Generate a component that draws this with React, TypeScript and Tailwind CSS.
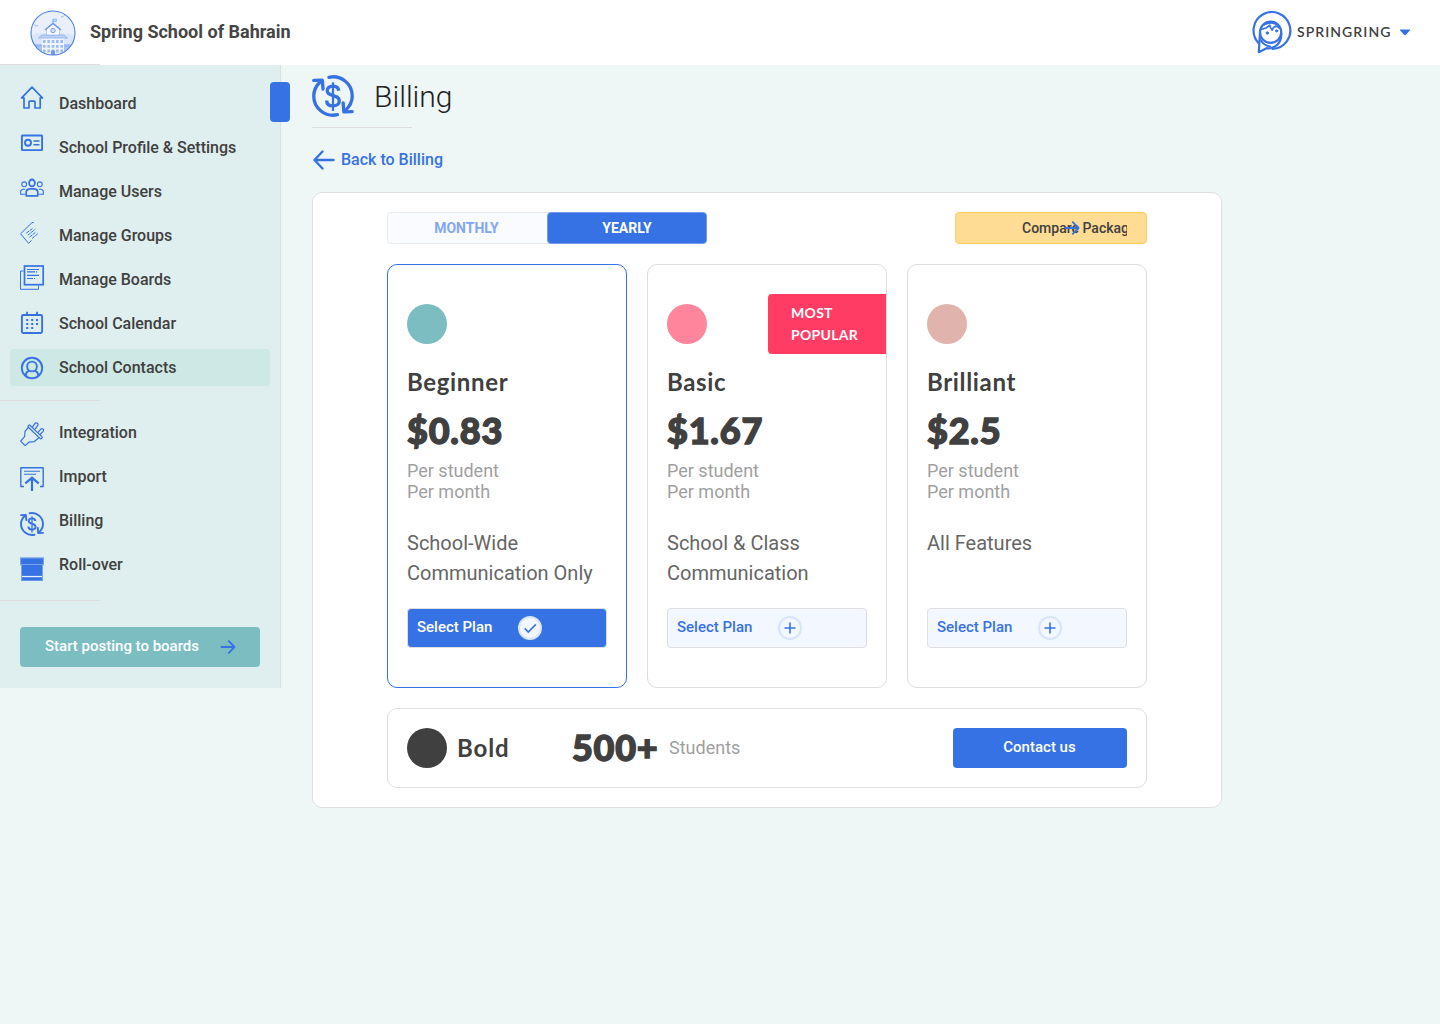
import type { ReactNode } from "react";

const BLUE = "#3772e4";

function Svg({ className = "", children, size = 24 }: { className?: string; children: ReactNode; size?: number }) {
  return (
    <svg
      width={size}
      height={size}
      viewBox="0 0 24 24"
      fill="none"
      stroke={BLUE}
      strokeWidth="1.6"
      className={`shrink-0 ${className}`}
    >
      {children}
    </svg>
  );
}

function HomeIcon({ className }: { className?: string }) {
  return (
    <Svg className={className}>
      <path d="M1.600 11.800 12 1.200l10.400 10.600h-2.200V22h-5.200v-6q0-.9-.9-.9H9.900q-.9 0-.9.900v6H4V11.800z" strokeLinejoin="round" strokeWidth="1.700" />
    </Svg>
  );
}

function ProfileIcon({ className }: { className?: string }) {
  return (
    <Svg className={className}>
      <rect x="1.9" y="4.500" width="20.200" height="14.600" rx=".6" strokeWidth="1.900" />
      <circle cx="8" cy="11.800" r="3" strokeWidth="1.900" />
      <path d="M13.500 10h6M13.500 13.800h6" strokeWidth="1.500" />
    </Svg>
  );
}

function UsersIcon({ className }: { className?: string }) {
  return (
    <Svg className={className}>
      <ellipse cx="12" cy="6.900" rx="2.900" ry="3.400" strokeWidth="1.800" />
      <path d="M6.200 19.800v-3.300c0-2.600 2-3.600 4.200-3.600h3.200c2.200 0 4.200 1 4.200 3.600v3.300z" strokeLinejoin="round" strokeWidth="1.700" />
      <g strokeWidth="1.100">
        <circle cx="4.200" cy="8.300" r="2.400" />
        <circle cx="19.800" cy="8.300" r="2.400" />
        <path d="M5.200 18.300H.6v-2.200c0-1.800 1.200-2.800 3-2.800h1.600M18.800 18.300h4.600v-2.200c0-1.800-1.200-2.800-3-2.800h-1.600" />
      </g>
    </Svg>
  );
}

function GroupsIcon({ className }: { className?: string }) {
  return (
    <Svg className={className}>
      <g strokeWidth="1" strokeLinejoin="round">
        <path d="M13.800 1.600h-1.800L.6 12.800l8 9.600 3-3" />
        <path d="m6.200 12.200 6.600-4.800M7.800 14.200l7.500-6M9.500 16.200l6-5M12 17.500l5.800-4.800" strokeDasharray="3.500 .7" />
      </g>
    </Svg>
  );
}

function BoardsIcon({ className }: { className?: string }) {
  return (
    <Svg className={className}>
      <rect x="4.500" y="1" width="18.700" height="18.700" strokeWidth="1.700" />
      <path d="M3.700 6H.5v18.300h18v-3.800" strokeWidth="1" />
      <path d="M7 4.500h12M7 6.800h8m1 0h1.200M7 10.300h12M7 13.500h6m1 0h1" strokeWidth="1.200" />
    </Svg>
  );
}

function CalendarIcon({ className }: { className?: string }) {
  return (
    <Svg className={className}>
      <rect x="1.900" y="4" width="20.200" height="18" rx="1.500" strokeWidth="1.900" />
      <path d="M7 .8V4M17 .8V4" strokeWidth="1.800" />
      <path d="M6.200 9h2M11.200 9h2M16 9h2M6.200 13h2M11.200 13h2M16 13h2M6.200 17h2M11.200 17h2" strokeWidth="1.800" />
    </Svg>
  );
}

function ContactsIcon({ className }: { className?: string }) {
  return (
    <Svg className={className}>
      <circle cx="12" cy="12" r="10.200" strokeWidth="1.900" />
      <circle cx="12" cy="10.500" r="4.900" strokeWidth="1.900" />
      <path d="M5.700 19.300c.2-2.500 1.400-3.900 3.400-4.700M18.300 19.300c-.2-2.500-1.400-3.900-3.400-4.700" strokeWidth="1.900" />
    </Svg>
  );
}

function PlugIcon({ className }: { className?: string }) {
  return (
    <Svg className={className}>
      <g strokeWidth="1.200" strokeLinejoin="round" strokeLinecap="round">
        <path d="M8.300 3.600q.8-1.200 1.900-.1L21.800 14.600q1 1-.2 1.900-.9.700-1.700-.1L8.400 5.300q-.8-.9-.1-1.700z" />
        <path d="M8.300 5.500 5 9.300l-.3 5L.7 19.100 5 23.600l3.900-3.400 5.200-.5 4.700-3.900" />
        <path d="m12.700 4.700 2.200-3q1.200-1.500 2.500-.4 1.200 1 .2 2.400l-2.300 3.100M18.100 10.300l2.700-3.100q1.200-1.200 2.200-.2 1.100 1 .1 2.300l-3 3.200" />
      </g>
    </Svg>
  );
}

function ImportIcon({ className }: { className?: string }) {
  return (
    <Svg className={className}>
      <path d="M4 19.500H.8V.7h22.400v18.800H20" strokeWidth="1.400" strokeLinejoin="round" />
      <path d="M4 4.200h16M4 7.300h12" strokeWidth="1.100" />
      <path d="M12 24.400V10.800M5.300 16.400l6.700-5.600 6.700 5.600" strokeWidth="2.200" />
    </Svg>
  );
}

function BillingIcon({ className, size }: { className?: string; size?: number }) {
  return (
    <Svg className={className} size={size}>
      <g strokeWidth="1.900" strokeLinecap="round" strokeLinejoin="round">
        <path d="M9.700 1.300C16.500-.2 23 4.800 23 12c0 3.300-1.600 6.200-4.200 8.500M14.500 22.700C7.500 24.200 1 19 1 12c0-3.300 1.400-6 3.900-8.300" />
        <path d="M1 3.100 5.900 3l.4 5M23 20.900l-4.800.2-.4-5.200" />
      </g>
      <path d="M15.300 9c-.2-1.800-1.500-2.600-3.300-2.600-2 0-3.300 1-3.300 2.600 0 3.800 6.900 1.700 6.900 5.800 0 1.700-1.400 2.800-3.600 2.800S8.400 16.500 8.400 14.500" strokeWidth="1.900" />
      <path d="M12 4.200v16.300" strokeWidth="1.300" />
    </Svg>
  );
}

function RolloverIcon({ className }: { className?: string }) {
  return (
    <svg width="24" height="24" viewBox="0 0 24 24" className={`shrink-0 ${className ?? ""}`}>
      <path d="M0 .3h24v8H0z" fill="#7ba2eb" />
      <path d="M1 1.500h22v5.500H1z" fill={BLUE} />
      <path d="M1 7.300h22V24H1z" fill="#7ba2eb" />
      <path d="M2 8.100h20v10.700H2zM2 20.500h20v2.800H2z" fill={BLUE} />
      <path d="M2 19h20v1H2z" fill="#e6f1fb" />
    </svg>
  );
}

function SchoolLogo() {
  return (
    <svg width="46" height="46" viewBox="0 0 46 46" fill="none" className="shrink-0">
      <defs>
        <clipPath id="logo-disc">
          <circle cx="23" cy="23" r="22" />
        </clipPath>
      </defs>
      <g clipPath="url(#logo-disc)">
        <path d="M0 0h46v46H0z" fill="#e9effb" />
        <path d="M0 28q7-7 12-4l11-3 12 3q5-2 11 4v18H0z" fill="#dae5f9" />
        <path d="M0 34h46v12H0z" fill="#a9c4f4" />
        <path d="M0 36h46" stroke="#8eb0ef" />
        <path d="M12 28h22v18H12z" fill="#eff4fe" />
        <path d="M8.500 28 12 25h22l3.500 3z" fill="#bed2f8" stroke="#8baef0" strokeWidth=".8" />
        <path d="M16.500 25v-7L23 13l6.500 5v7z" fill="#f8faff" stroke="#8baef0" strokeWidth=".6" />
        <path d="m15 20 8-6.500 8 6.500" stroke="#7199e8" strokeWidth="1.600" />
        <circle cx="23" cy="20.500" r="2.200" fill="#d4e2fb" stroke="#6f9af0" />
        <path d="M23 14V9" stroke="#7ca2ef" />
        <path d="M23 9h3.500v2.500H23z" fill="#b7cef8" stroke="#7ca2ef" strokeWidth=".5" />
        <path d="M13 31.500h20M13 36.300h20M13 41h20" stroke="#9dbbf3" strokeWidth="2.800" strokeDasharray="2.600 1.750" />
        <path d="M21 40.500h4V46h-4z" fill="#6f9aec" />
        <path d="M4 14.500 6 16l2-.3M31 7l2-.2 2-2" stroke="#8baef0" strokeWidth=".8" />
      </g>
      <circle cx="23" cy="23" r="22" stroke="#4b80e8" strokeWidth="1.100" />
    </svg>
  );
}

function BirdLogo() {
  return (
    <svg width="40" height="43" viewBox="0 0 40 43" fill="none" stroke={BLUE} strokeWidth="2.200" strokeLinejoin="round" strokeLinecap="round" className="shrink-0">
      <path d="M6.700 32.300A18.400 18.400 0 1 1 20.500 37.900" />
      <path d="M8 21.500 6.800 41.200 14.500 37.200C23 38.300 29.800 32 29.300 22" />
      <circle cx="18.600" cy="21.200" r="10.600" />
      <path d="M9 18.300c3.800-.2 6.600-1.500 8.700-4.200.5 2.100 1.200 3.600 2.500 5 .5-2 1.600-3.400 3.400-4 1.600.2 3.200 1 4.300 2.500" strokeWidth="1.700" />
      <path d="M12.500 13.300c3.500-2.300 9-2.300 12.500 0" strokeWidth="2.400" />
      <path d="M8.200 28.500c2.300 4 5.300 6.300 9.800 7" strokeWidth="2" />
      <circle cx="15.300" cy="22" r="1.200" fill={BLUE} strokeWidth="1" />
      <circle cx="24.700" cy="19.900" r="1.100" fill={BLUE} strokeWidth="1" />
    </svg>
  );
}

function ArrowRight({ className = "" }: { className?: string }) {
  return (
    <svg width="16" height="14" viewBox="0 0 16 14" fill="none" stroke={BLUE} strokeWidth="1.900" strokeLinecap="round" strokeLinejoin="round" className={`shrink-0 ${className}`}>
      <path d="M1.500 7h13M8.800 1.200 14.500 7l-5.700 5.800" />
    </svg>
  );
}

type Item = { label: string; icon: ReactNode; active?: boolean };

const primary: Item[] = [
  { label: "Dashboard", icon: <HomeIcon className="mt-[5px]" /> },
  { label: "School Profile & Settings", icon: <ProfileIcon className="mt-[6px]" /> },
  { label: "Manage Users", icon: <UsersIcon className="mt-[7px]" /> },
  { label: "Manage Groups", icon: <GroupsIcon className="mt-[8px]" /> },
  { label: "Manage Boards", icon: <BoardsIcon className="mt-[8px] overflow-visible" /> },
  { label: "School Calendar", icon: <CalendarIcon className="mt-[10px]" /> },
  { label: "School Contacts", icon: <ContactsIcon className="mt-[7px]" />, active: true },
];

const secondary: Item[] = [
  { label: "Integration", icon: <PlugIcon className="mt-[11px]" /> },
  { label: "Import", icon: <ImportIcon className="mt-[12px]" /> },
  { label: "Billing", icon: <BillingIcon className="mt-[13px]" /> },
  { label: "Roll-over", icon: <RolloverIcon className="mt-[14px]" /> },
];

function NavItem({ item, leading = "leading-[44px]" }: { item: Item; leading?: string }) {
  if (item.active) {
    return (
      <div className="flex h-11 items-center px-2.5">
        <div className="mt-px flex h-[37px] w-full items-start gap-[15px] rounded bg-[#cee8e6] pl-2.5">
          {item.icon}
          <span className="leading-[37px]">{item.label}</span>
        </div>
      </div>
    );
  }
  return (
    <div className="flex h-11 items-start gap-[15px] pl-5">
      {item.icon}
      <span className={leading}>{item.label}</span>
    </div>
  );
}

type Plan = { name: string; price: string; dot: string; lines: string[]; selected?: boolean; popular?: boolean };

const plans: Plan[] = [
  { name: "Beginner", price: "$0.83", dot: "bg-[#7bbdc1]", lines: ["School-Wide", "Communication Only"], selected: true },
  { name: "Basic", price: "$1.67", dot: "bg-[#ff859d]", lines: ["School & Class", "Communication"], popular: true },
  { name: "Brilliant", price: "$2.5", dot: "bg-[#e0b3ad]", lines: ["All Features"] },
];

function PlanCard({ plan }: { plan: Plan }) {
  return (
    <div
      className={`relative h-[424px] w-60 overflow-hidden rounded-[10px] border px-[19px] pt-[39px] ${
        plan.selected ? "border-[#3772e4]" : "border-[#dedede]"
      }`}
    >
      {plan.popular && (
        <div className="absolute top-[29px] right-0 h-[60px] w-[118px] rounded-l bg-[#ff3c64] pt-2 pl-[23px] font-['Lato'] text-[14px] leading-[22px] font-bold tracking-[0.3px] text-white">
          MOST
          <br />
          POPULAR
        </div>
      )}
      <div className={`size-10 rounded-full ${plan.dot}`} />
      <h2 className="mt-[22px] font-['Lato'] text-[24px] leading-8 font-bold tracking-[0.65px]">{plan.name}</h2>
      <div className="mt-2 mb-[6px] font-['Lato'] text-[36px] leading-[48px] font-black tracking-[0.8px] [-webkit-text-stroke:1.4px_#404040]">
        {plan.price}
      </div>
      <p className="text-[18px] leading-[21px] text-[#9f9f9f]">
        Per student
        <br />
        Per month
      </p>
      <div className="mt-[26px] h-[60px] text-[20px] leading-[30px] whitespace-nowrap text-[#666]">
        {plan.lines.map((l) => (
          <div key={l}>{l}</div>
        ))}
      </div>
      <button
        className={`mt-5 flex h-10 w-[200px] items-center rounded border border-[#dedede] pl-[9px] text-[15px] font-medium ${
          plan.selected ? "bg-[#3772e4] text-white" : "bg-[#f3f7ff] text-[#3772e4]"
        }`}
      >
        <span className="w-[101px] pb-[2px] text-left">Select Plan</span>
        <svg width="24" height="24" viewBox="0 0 24 24" fill="none" stroke={BLUE} strokeWidth="1.600">
          <circle cx="12" cy="12" r="11" fill="#f3f7ff" stroke="#d9e5fc" strokeWidth="2" />
          {plan.selected ? <path d="m6.800 12.400 3.500 3.600 7.500-7.600" /> : <path d="M12 6.500v11M6.500 12h11" />}
        </svg>
      </button>
    </div>
  );
}

export default function App() {
  return (
    <div className="min-h-[1024px] w-full bg-[#eef7f6] font-['Roboto',sans-serif] text-[#404040]">
      <header className="flex h-[65px] items-center justify-between bg-white pr-[29px] pl-[29.5px]">
        <div className="flex items-center gap-[14.5px]">
          <SchoolLogo />
          <span className="pb-0.5 text-[18px] font-bold text-[#454545]">Spring School of Bahrain</span>
        </div>
        <div className="flex items-center pb-px">
          <BirdLogo />
          <span className="ml-[5px] w-[94px] pb-0.5 font-['Lato'] text-[14px] font-semibold tracking-[1.05px]">SPRINGRING</span>
          <svg width="12" height="7" viewBox="0 0 12 7" className="ml-2">
            <path d="M1.500.5h9q1 0 .3 1L7 5.800q-1 .9-2 0L1.200 1.500q-.7-1 .3-1z" fill={BLUE} />
          </svg>
        </div>
      </header>

      <div className="flex items-start">
        <aside className="relative h-[623px] w-[281px] shrink-0 border-r border-[#dedede] bg-[#dfeeee]">
          <div className="-mt-px h-px w-[100px] bg-[#dedede]" />
          <div className="absolute top-[17px] -right-[10px] h-10 w-5 rounded bg-[#3772e4]" />
          <nav className="pt-4 text-[16px] font-medium">
            {primary.map((i) => (
              <NavItem key={i.label} item={i} leading="leading-[46px]" />
            ))}
            <div className="mt-[11px] mb-[10px] h-px w-[100px] bg-[#dedede]" />
            {secondary.map((i) => (
              <NavItem key={i.label} item={i} />
            ))}
            <div className="mt-[13px] h-px w-[100px] bg-[#dedede]" />
          </nav>
          <button className="mt-[25.5px] ml-5 flex h-10 w-60 items-center rounded bg-[#7bbdc1] pl-[25px] text-[15px] font-medium text-white">
            <span className="w-[175px] text-left whitespace-nowrap">Start posting to boards</span>
            <ArrowRight />
          </button>
        </aside>

        <main className="ml-[31px] w-[910px] pt-[10px]">
          <div className="flex h-[42px] items-center gap-5">
            <BillingIcon size={42} />
            <h1 className="pt-px text-[30px] leading-[40px] font-light text-[#212121]">Billing</h1>
          </div>
          <div className="mt-[10px] h-px w-[100px] bg-[#dedede]" />
          <a className="mt-5 flex h-6 items-center gap-[5px] text-[16px] font-medium text-[#3772e4]">
            <svg width="24" height="20" viewBox="0 0 24 20" fill="none" stroke={BLUE} strokeWidth="2.400" strokeLinecap="round" strokeLinejoin="round">
              <path d="M21.500 10H2.500M10.500 1.500 2.500 10l8 8.500" />
            </svg>
            Back to Billing
          </a>

          <section className="mt-5 h-[616px] rounded-[10px] border border-[#dedede] bg-white px-[74px] pt-[19px]">
            <div className="flex justify-between">
              <div className="flex h-8 w-80 rounded border border-[#e7eaf1] bg-[#f9fbff] text-[14px] font-bold">
                <div className="flex flex-1 items-center justify-center pr-0.5 text-[#82a7f0]">MONTHLY</div>
                <div className="-my-px -mr-px flex w-40 items-center justify-center rounded border border-[#6f9aec] bg-[#3772e4] text-white">YEARLY</div>
              </div>
              <div className="relative flex h-8 w-48 items-center rounded border border-[#ffcb5f] bg-[#ffdc94] pr-[19px] pl-[66px] text-[14px] font-medium">
                <span className="overflow-hidden whitespace-nowrap">Compare Packages</span>
                <ArrowRight className="absolute left-[108px]" />
              </div>
            </div>
            <div className="mt-5 flex gap-5">
              {plans.map((p) => (
                <PlanCard key={p.name} plan={p} />
              ))}
            </div>
            <div className="mt-5 flex h-20 items-center rounded-[10px] border border-[#dedede] px-[19px]">
              <div className="size-10 rounded-full bg-[#404040]" />
              <span className="ml-2.5 w-[115px] font-['Lato'] text-[24px] font-bold tracking-[0.9px]">Bold</span>
              <span className="w-[97px] pb-0.5 font-['Lato'] text-[36px] leading-[48px] font-black tracking-[0.7px] [-webkit-text-stroke:1.4px_#404040]">
                500+
              </span>
              <span className="pb-0.5 text-[18px] text-[#9f9f9f]">Students</span>
              <button className="ml-auto h-10 w-[174px] rounded bg-[#3772e4] pr-px pb-[2px] text-[15px] font-medium text-white">Contact us</button>
            </div>
          </section>
        </main>
      </div>
    </div>
  );
}
